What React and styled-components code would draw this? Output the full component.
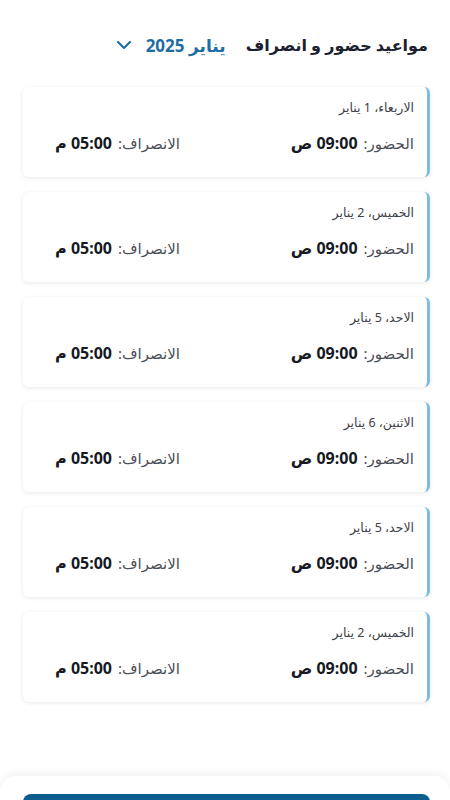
import React from 'react';
import styled, { createGlobalStyle } from 'styled-components';

const GlobalStyle = createGlobalStyle`
  body {
    margin: 0;
    background: #ffffff;
    font-family: "Noto Sans", "DejaVu Sans", sans-serif;
  }
`;

const days = [
    { date: 'الاربعاء، 1 يناير' },
    { date: 'الخميس، 2 يناير' },
    { date: 'الاحد، 5 يناير' },
    { date: 'الاثنين، 6 يناير' },
    { date: 'الاحد، 5 يناير' },
    { date: 'الخميس، 2 يناير' },
];

const App = () => {
    return (
        <Page dir="rtl">
            <GlobalStyle />
            <Header>
                <Title>مواعيد حضور و انصراف</Title>
                <MonthPicker type="button">
                    <span>يناير 2025</span>
                    <svg width={16} height={10} viewBox="0 0 16 10" fill="none">
                        <path d="M2 2l6 6 6-6" stroke="currentColor" strokeWidth="2.2" strokeLinecap="round" strokeLinejoin="round" />
                    </svg>
                </MonthPicker>
            </Header>

            <List>
                {days.map((d, i) => (
                    <Card key={i}>
                        <DateLabel>{d.date}</DateLabel>
                        <Times>
                            <TimeItem>
                                <Label>الحضور:</Label>
                                <Value>09:00 ص</Value>
                            </TimeItem>
                            <TimeItem>
                                <Label>الانصراف:</Label>
                                <Value>05:00 م</Value>
                            </TimeItem>
                        </Times>
                    </Card>
                ))}
            </List>

            {/* bottom action bar, only its top edge is in view */}
            <Footer>
                <MainButton type="button" aria-label="تسجيل الحضور" />
            </Footer>
        </Page>
    );
};

export default App;

const Page = styled.div`
  width: 450px;
  height: 800px;
  box-sizing: border-box;
  overflow: hidden;
`;

const Header = styled.div`
  display: flex;
  align-items: center;
  gap: 20px;
  padding: 30px 22px 0 20px;
  height: 30px;
`;

const Title = styled.h1`
  margin: 0;
  font-size: 16px;
  font-weight: 600;
  color: #1c2130;
`;

const MonthPicker = styled.button`
  display: flex;
  align-items: center;
  gap: 14px;
  border: none;
  background: none;
  padding: 0;
  font-family: inherit;
  font-size: 17px;
  font-weight: 700;
  color: #1f6ea3;
  cursor: pointer;
`;

const List = styled.div`
  display: flex;
  flex-direction: column;
  gap: 15px;
  padding: 27px 20px 0 23px;
`;

const Card = styled.div`
  height: 90px;
  box-sizing: border-box;
  background: #fff;
  border-radius: 6px;
  border-right: 3px solid #7fbbe8;
  box-shadow: 0 1px 5px rgba(0, 0, 0, 0.09);
  padding: 12px 13px 0 32px;
  display: flex;
  flex-direction: column;
  gap: 15px;
`;

const DateLabel = styled.div`
  font-size: 12.5px;
  color: #3d4148;
  line-height: 18px;
`;

const Times = styled.div`
  display: flex;
  justify-content: space-between;
  align-items: center;
`;

const TimeItem = styled.div`
  display: flex;
  align-items: baseline;
  gap: 6px;
  font-size: 15px;
`;

const Label = styled.span`
  color: #4a4e56;
`;

const Value = styled.span`
  color: #16191f;
  font-size: 16px;
  font-weight: 700;
`;

const Footer = styled.div`
  margin-top: 74px;
  background: #fff;
  border-radius: 16px 16px 0 0;
  box-shadow: 0 -3px 10px rgba(0, 0, 0, 0.05);
  padding: 18px 20px 20px 23px;
`;

const MainButton = styled.button`
  display: block;
  width: 100%;
  height: 52px;
  border: none;
  border-radius: 8px;
  background: #0e5d8f;
`;
